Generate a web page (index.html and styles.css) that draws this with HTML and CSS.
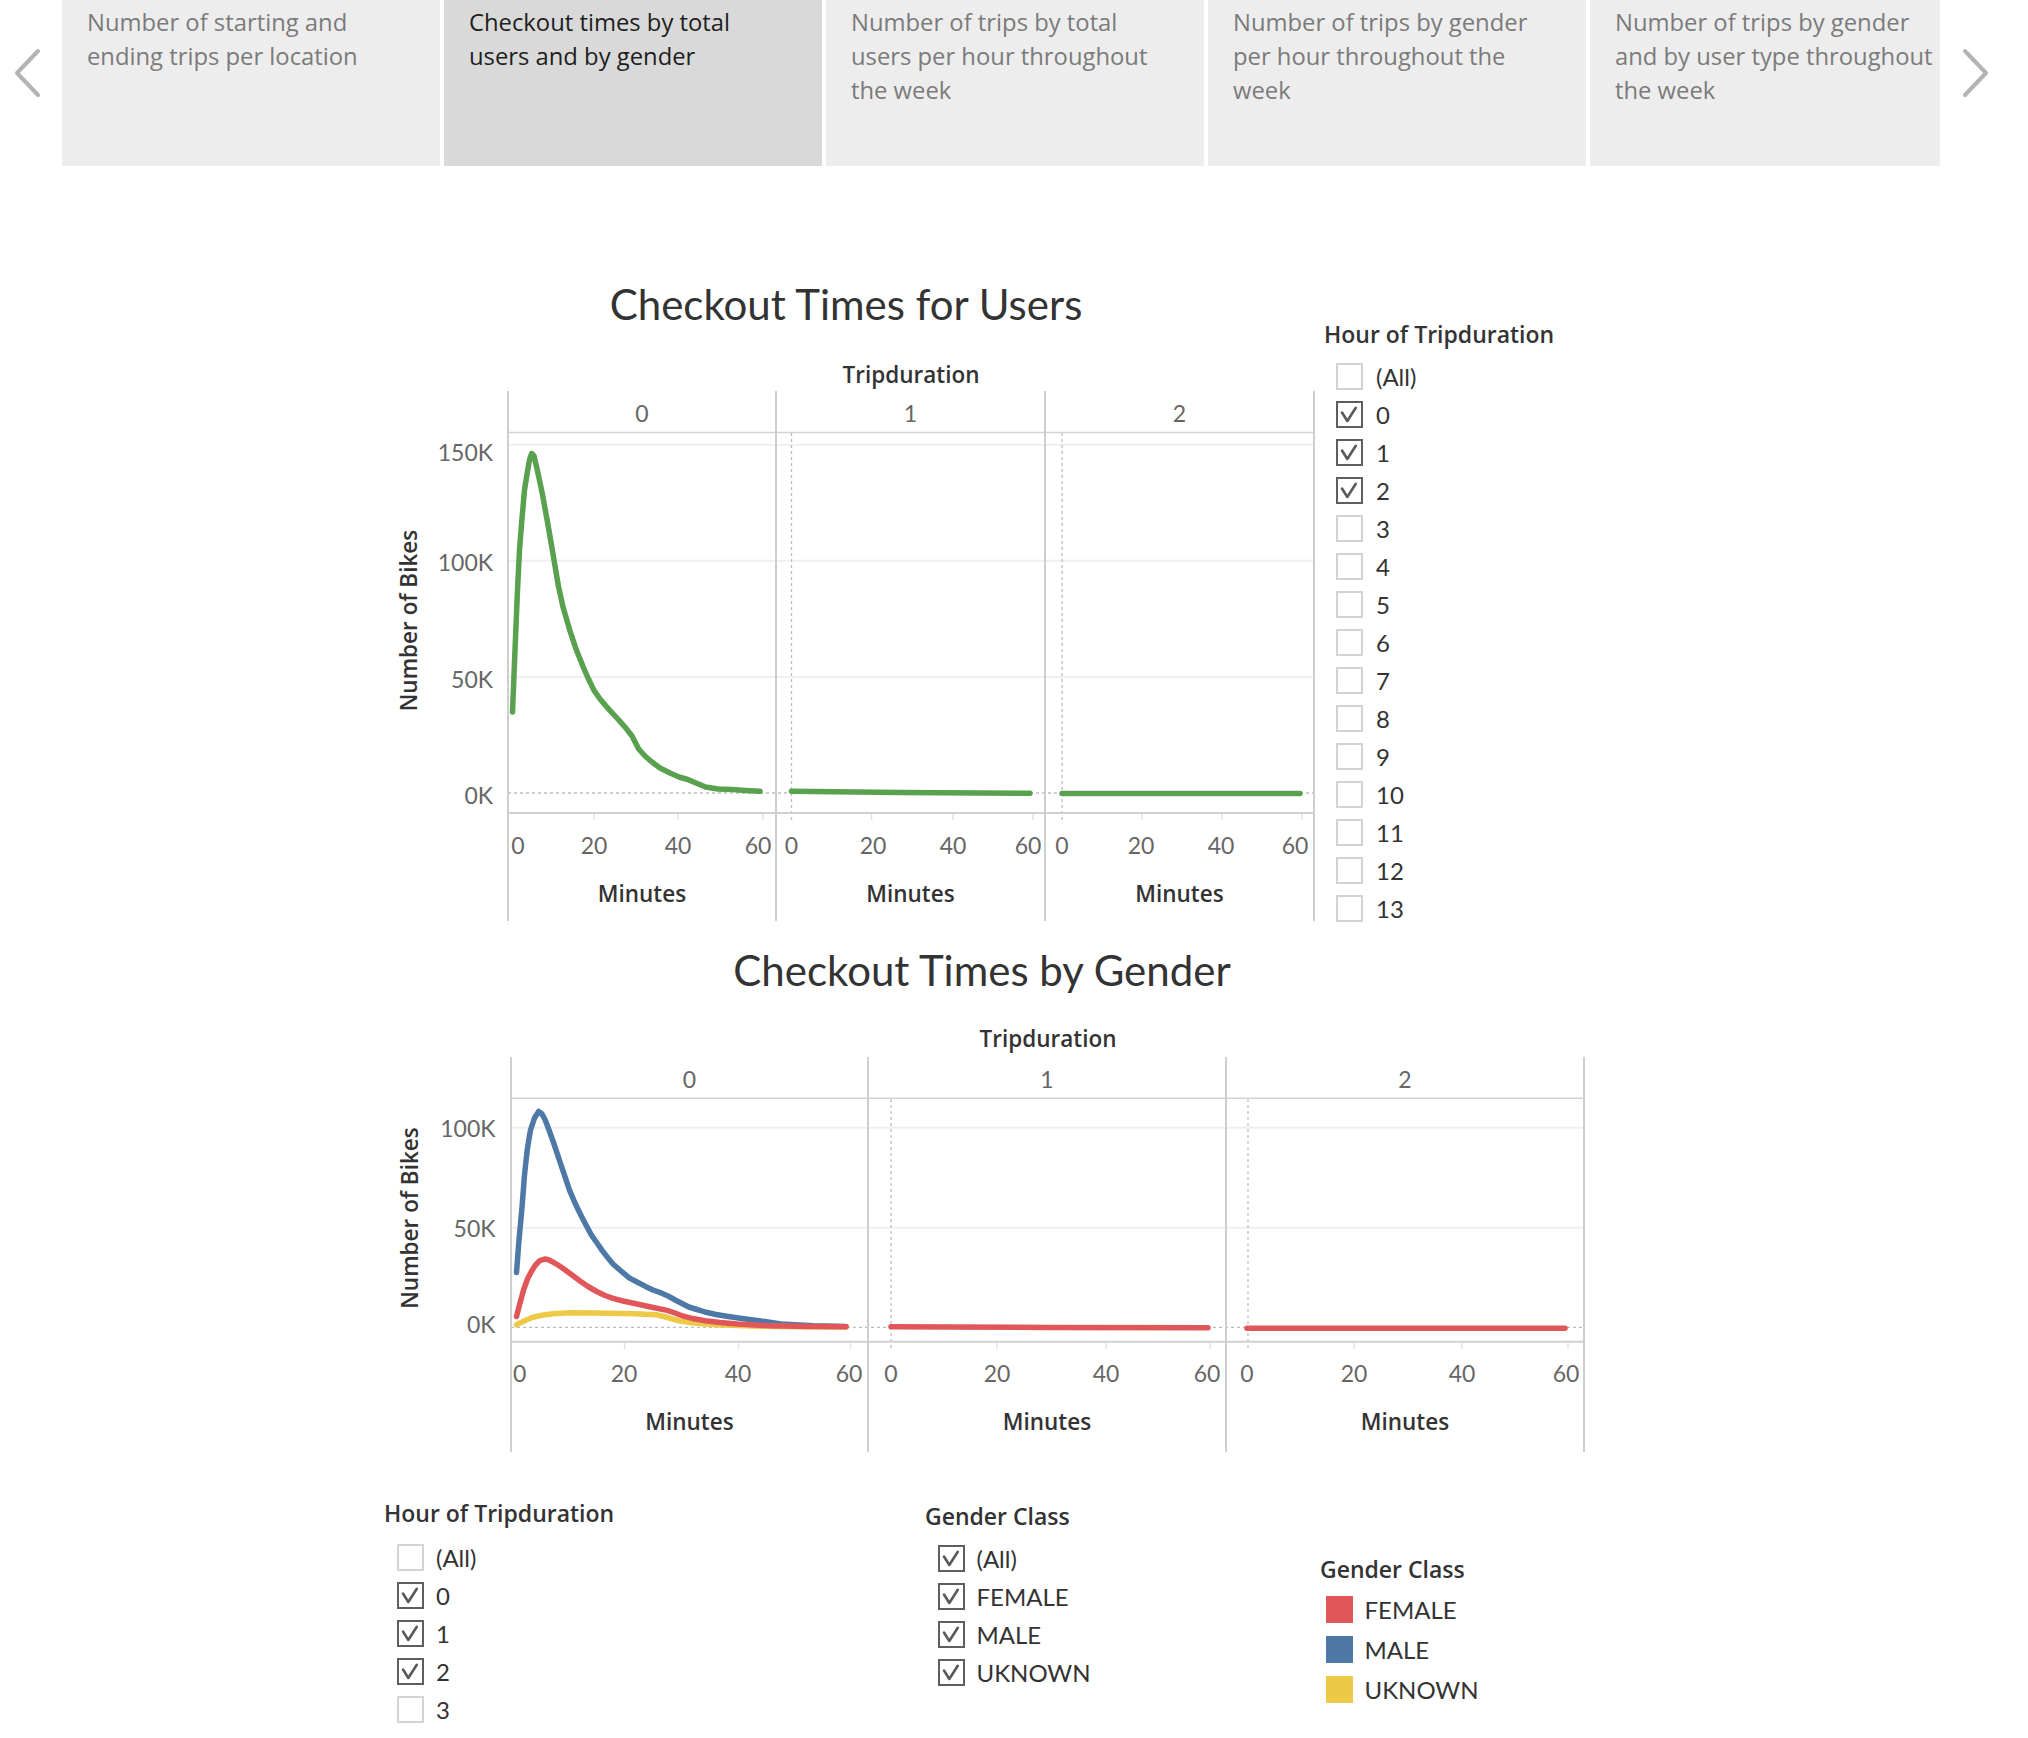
FILE: index.html
```html
<!DOCTYPE html>
<html lang="en">
<head>
<meta charset="utf-8">
<title>Checkout times by total users and by gender</title>
<link rel="stylesheet" href="styles.css">
</head>
<body>
<header class="tabbar">
  <div class="nav nav-left">
    <svg width="28" height="48" viewBox="0 0 28 48"><path d="M25 2 L4 24 L25 46" class="chev"/></svg>
  </div>
  <div class="tabs">
    <div class="tab">Number of starting and<br>ending trips per location</div>
    <div class="tab active">Checkout times by total<br>users and by gender</div>
    <div class="tab">Number of trips by total<br>users per hour throughout<br>the week</div>
    <div class="tab">Number of trips by gender<br>per hour throughout the<br>week</div>
    <div class="tab">Number of trips by gender<br>and by user type throughout<br>the week</div>
  </div>
  <div class="nav nav-right">
    <svg width="28" height="48" viewBox="0 0 28 48"><path d="M3 2 L24 24 L3 46" class="chev"/></svg>
  </div>
</header>

<main>
  <section class="row1">
    <div class="sheet1">
      <h2 class="title">Checkout Times for Users</h2>
      <svg class="chart1" width="940" height="575" viewBox="376 352 940 575">
        <g class="grid">
          <line x1="508" y1="444.8" x2="1314" y2="444.8"/>
          <line x1="508" y1="560.8" x2="1314" y2="560.8"/>
          <line x1="508" y1="676.9" x2="1314" y2="676.9"/>
        </g>
        <line class="hline" x1="508" y1="432.6" x2="1314" y2="432.6"/>
        <line class="dash" x1="508" y1="793" x2="1314" y2="793"/>
        <line class="dash" x1="791.5" y1="433" x2="791.5" y2="821"/>
        <line class="dash" x1="1062" y1="433" x2="1062" y2="821"/>
        <line class="axis" x1="508" y1="813" x2="1314" y2="813"/>
        <g class="ticks">
          <line x1="594" y1="814" x2="594" y2="820"/><line x1="678" y1="814" x2="678" y2="820"/><line x1="763" y1="814" x2="763" y2="820"/>
          <line x1="871.5" y1="814" x2="871.5" y2="820"/><line x1="953" y1="814" x2="953" y2="820"/><line x1="1033" y1="814" x2="1033" y2="820"/>
          <line x1="1142" y1="814" x2="1142" y2="820"/><line x1="1222" y1="814" x2="1222" y2="820"/><line x1="1302" y1="814" x2="1302" y2="820"/>
        </g>
        <g class="panel">
          <line x1="508" y1="391" x2="508" y2="921"/>
          <line x1="776" y1="391" x2="776" y2="921"/>
          <line x1="1045" y1="391" x2="1045" y2="921"/>
          <line x1="1314" y1="391" x2="1314" y2="921"/>
        </g>
        <polyline class="ln green" points="512.5,712 515,650 517.5,590 519.5,550 521.8,521 524.5,490 527.2,473 529.5,460 531.6,453.5 534,456 537,468.7 542,492 547.3,521 552,548 558.4,586 563,607 569.6,629.6 576,649 583,666.5 588,678 594,690.4 600,699 607.5,707.8 616,717 625.3,727.4 632,736 638.7,749 645,756 652,762 660,768 670,773 679,777 687.8,779.5 696,783 705.6,787 718,789 732.4,789.6 745,790.5 760,791.3"/>
        <polyline class="ln green" points="791.5,791.3 900,792.4 1030,793.3"/>
        <polyline class="ln green" points="1062,793.5 1300,793.6"/>

        <text class="axt" x="911" y="383" text-anchor="middle">Tripduration</text>
        <g class="hdr" text-anchor="middle">
          <text x="642" y="422">0</text><text x="910.5" y="422">1</text><text x="1179.5" y="422">2</text>
        </g>
        <g class="tick" text-anchor="end">
          <text x="493" y="461">150K</text><text x="493" y="571">100K</text><text x="493" y="688">50K</text><text x="493" y="803.5">0K</text>
        </g>
        <g class="tick" text-anchor="middle">
          <text x="518" y="853.5">0</text><text x="594" y="853.5">20</text><text x="678" y="853.5">40</text><text x="758" y="853.5">60</text>
          <text x="791.5" y="853.5">0</text><text x="873" y="853.5">20</text><text x="953" y="853.5">40</text><text x="1028" y="853.5">60</text>
          <text x="1062" y="853.5">0</text><text x="1141" y="853.5">20</text><text x="1221" y="853.5">40</text><text x="1295" y="853.5">60</text>
        </g>
        <g class="axt" text-anchor="middle">
          <text x="642" y="902">Minutes</text><text x="910.5" y="902">Minutes</text><text x="1179.5" y="902">Minutes</text>
        </g>
        <text class="axt" x="408" y="620.5" text-anchor="middle" dominant-baseline="central" transform="rotate(-90 408 620.5)">Number of Bikes</text>
      </svg>
    </div>

    <aside class="filter filter1">
      <h3 class="ftitle">Hour of Tripduration</h3>
      <ul class="flist clip">
        <li class="fitem"><span class="cb"></span>(All)</li>
        <li class="fitem"><span class="cb on"><svg viewBox="0 0 23 23"><path d="M4 9.5 L9.3 18 L17.8 4.8"/></svg></span>0</li>
        <li class="fitem"><span class="cb on"><svg viewBox="0 0 23 23"><path d="M4 9.5 L9.3 18 L17.8 4.8"/></svg></span>1</li>
        <li class="fitem"><span class="cb on"><svg viewBox="0 0 23 23"><path d="M4 9.5 L9.3 18 L17.8 4.8"/></svg></span>2</li>
        <li class="fitem"><span class="cb"></span>3</li>
        <li class="fitem"><span class="cb"></span>4</li>
        <li class="fitem"><span class="cb"></span>5</li>
        <li class="fitem"><span class="cb"></span>6</li>
        <li class="fitem"><span class="cb"></span>7</li>
        <li class="fitem"><span class="cb"></span>8</li>
        <li class="fitem"><span class="cb"></span>9</li>
        <li class="fitem"><span class="cb"></span>10</li>
        <li class="fitem"><span class="cb"></span>11</li>
        <li class="fitem"><span class="cb"></span>12</li>
        <li class="fitem"><span class="cb"></span>13</li>
      </ul>
    </aside>
  </section>

  <section class="sheet2">
    <h2 class="title title2">Checkout Times by Gender</h2>
    <svg class="chart2" width="1210" height="440" viewBox="380 1020 1210 440">
      <g class="grid">
        <line x1="511" y1="1127.7" x2="1584" y2="1127.7"/>
        <line x1="511" y1="1227.7" x2="1584" y2="1227.7"/>
      </g>
      <line class="hline" x1="511" y1="1098.3" x2="1584" y2="1098.3"/>
      <line class="dash" x1="511" y1="1327.3" x2="1584" y2="1327.3"/>
      <line class="dash" x1="891" y1="1099" x2="891" y2="1350"/>
      <line class="dash" x1="1248" y1="1099" x2="1248" y2="1350"/>
      <line class="axis" x1="511" y1="1341.7" x2="1584" y2="1341.7"/>
      <g class="ticks">
        <line x1="624.6" y1="1343" x2="624.6" y2="1349"/><line x1="738.7" y1="1343" x2="738.7" y2="1349"/><line x1="850.6" y1="1343" x2="850.6" y2="1349"/>
        <line x1="997" y1="1343" x2="997" y2="1349"/><line x1="1106" y1="1343" x2="1106" y2="1349"/><line x1="1210" y1="1343" x2="1210" y2="1349"/>
        <line x1="1354" y1="1343" x2="1354" y2="1349"/><line x1="1462" y1="1343" x2="1462" y2="1349"/><line x1="1568" y1="1343" x2="1568" y2="1349"/>
      </g>
      <g class="panel">
        <line x1="511" y1="1057" x2="511" y2="1452"/>
        <line x1="868" y1="1057" x2="868" y2="1452"/>
        <line x1="1226" y1="1057" x2="1226" y2="1452"/>
        <line x1="1584" y1="1057" x2="1584" y2="1452"/>
      </g>
      <polyline class="ln blue" points="516.5,1272.6 519,1240 522,1207.5 524.5,1175 527.3,1149.2 530.5,1130 534.4,1118.3 538.7,1111.5 542,1114 545.2,1120 549,1130 553.4,1142.3 561.5,1166.3 569.6,1190.3 575,1203 580.4,1214.3 586,1225 591.3,1234.9 597,1243 602.1,1250.4 608,1258 613,1264 621,1271 629.2,1277.8 637,1282 645.5,1286.4 653,1290 661.7,1293.2 668,1296 675.2,1300 682,1303.5 688.8,1307 697,1309.5 705,1312 716,1314.5 726.7,1316.2 742,1318.5 759.2,1320.7 780.9,1324 813.4,1325.8 846,1326.5"/>
      <polyline class="ln yellow" points="516.5,1324.8 521,1322.5 526.3,1320 531,1318 537.1,1316.2 545,1314.8 553.4,1313.8 569.6,1312.8 596.7,1313.1 634.6,1313.8 656.3,1314.8 664,1316.5 672.5,1319 680,1321 688.8,1322.4 700,1323.6 715.9,1324.8 759.2,1326.2 802.5,1326.8 846,1327"/>
      <polyline class="ln red" points="516.5,1316.5 520,1303 523.6,1289.8 527.5,1279 531.7,1270.9 535.5,1265 539.8,1260.6 545.2,1258.9 549,1260 553.4,1262.3 558,1265 564.2,1269.2 572,1275 580.4,1281.2 588,1286.5 596.7,1291.5 605,1295.5 613,1298.4 623,1301 634.6,1303.5 650.9,1307 667.1,1310.4 675,1313 683.4,1316.2 694,1318.8 705,1320.7 720,1322.5 737.5,1324 770,1325.8 810,1326.5 846,1326.8"/>
      <polyline class="ln red" points="891,1326.8 1050,1327.4 1208,1327.8"/>
      <polyline class="ln red" points="1247,1328.2 1565,1328.2"/>

      <text class="axt" x="1048" y="1047" text-anchor="middle">Tripduration</text>
      <g class="hdr" text-anchor="middle">
        <text x="689.5" y="1088">0</text><text x="1047" y="1088">1</text><text x="1405" y="1088">2</text>
      </g>
      <g class="tick" text-anchor="end">
        <text x="495.5" y="1137">100K</text><text x="495.5" y="1236.6">50K</text><text x="495.5" y="1332.6">0K</text>
      </g>
      <g class="tick" text-anchor="middle">
        <text x="519.7" y="1382">0</text><text x="624" y="1382">20</text><text x="738" y="1382">40</text><text x="849" y="1382">60</text>
        <text x="891" y="1382">0</text><text x="997" y="1382">20</text><text x="1106" y="1382">40</text><text x="1207" y="1382">60</text>
        <text x="1247" y="1382">0</text><text x="1354" y="1382">20</text><text x="1462" y="1382">40</text><text x="1566" y="1382">60</text>
      </g>
      <g class="axt" text-anchor="middle">
        <text x="689.5" y="1430">Minutes</text><text x="1047" y="1430">Minutes</text><text x="1405" y="1430">Minutes</text>
      </g>
      <text class="axt" x="409" y="1218" text-anchor="middle" dominant-baseline="central" transform="rotate(-90 409 1218)">Number of Bikes</text>
    </svg>
  </section>

  <section class="row3">
    <div class="filter bf1">
      <h3 class="ftitle">Hour of Tripduration</h3>
      <ul class="flist">
        <li class="fitem"><span class="cb"></span>(All)</li>
        <li class="fitem"><span class="cb on"><svg viewBox="0 0 23 23"><path d="M4 9.5 L9.3 18 L17.8 4.8"/></svg></span>0</li>
        <li class="fitem"><span class="cb on"><svg viewBox="0 0 23 23"><path d="M4 9.5 L9.3 18 L17.8 4.8"/></svg></span>1</li>
        <li class="fitem"><span class="cb on"><svg viewBox="0 0 23 23"><path d="M4 9.5 L9.3 18 L17.8 4.8"/></svg></span>2</li>
        <li class="fitem"><span class="cb"></span>3</li>
      </ul>
    </div>
    <div class="filter bf2">
      <h3 class="ftitle">Gender Class</h3>
      <ul class="flist">
        <li class="fitem"><span class="cb on"><svg viewBox="0 0 23 23"><path d="M4 9.5 L9.3 18 L17.8 4.8"/></svg></span>(All)</li>
        <li class="fitem"><span class="cb on"><svg viewBox="0 0 23 23"><path d="M4 9.5 L9.3 18 L17.8 4.8"/></svg></span>FEMALE</li>
        <li class="fitem"><span class="cb on"><svg viewBox="0 0 23 23"><path d="M4 9.5 L9.3 18 L17.8 4.8"/></svg></span>MALE</li>
        <li class="fitem"><span class="cb on"><svg viewBox="0 0 23 23"><path d="M4 9.5 L9.3 18 L17.8 4.8"/></svg></span>UKNOWN</li>
      </ul>
    </div>
    <div class="legend">
      <h3 class="ftitle">Gender Class</h3>
      <ul class="llist">
        <li class="litem"><span class="sw sw-female"></span>FEMALE</li>
        <li class="litem"><span class="sw sw-male"></span>MALE</li>
        <li class="litem"><span class="sw sw-unknown"></span>UKNOWN</li>
      </ul>
    </div>
  </section>
</main>
</body>
</html>
```

FILE: styles.css
```css
* { box-sizing: border-box; }

body {
  margin: 0;
  background: #ffffff;
  color: #333333;
  font-family: Lato, "Open Sans", "DejaVu Sans", sans-serif;
}

h2, h3, ul { margin: 0; padding: 0; }
ul { list-style: none; }

/* ---------- top tab bar ---------- */
.tabbar {
  display: flex;
  height: 166px;
}
.nav {
  padding-top: 49px;
}
.nav-left { width: 62px; padding-left: 13px; }
.nav-right { width: 88px; padding-left: 22px; }
.chev {
  fill: none;
  stroke: #b3b3b3;
  stroke-width: 4;
  stroke-linecap: round;
  stroke-linejoin: round;
}
.tabs {
  width: 1878px;
  display: flex;
  gap: 4px;
  overflow: hidden;
}
.tab {
  flex: 0 0 378px;
  background: #ededed;
  padding: 5px 8px 0 25px;
  font-family: "Open Sans", Lato, sans-serif;
  font-size: 23.8px;
  line-height: 34px;
  color: #7b7b7b;
  white-space: nowrap;
  overflow: hidden;
}
.tab.active {
  background: #d9d9d9;
  color: #1e1e1e;
}

/* ---------- sheets ---------- */
.row1 { display: flex; }
.sheet1 {
  margin-left: 376px;
  width: 940px;
}
.title {
  margin: 113px 0 23px;
  font-size: 42px;
  line-height: 50px;
  font-weight: 400;
  text-align: center;
  color: #333333;
  white-space: nowrap;
}
svg { display: block; overflow: visible; }

.sheet2 {
  margin-left: 380px;
  width: 1210px;
}
.title2 {
  margin: 18px 0 25px;
  padding-right: 6px;
}

.grid line { stroke: #efefef; stroke-width: 2; }
.hline { stroke: #d3d3d3; stroke-width: 1.5; }
.dash { stroke: #bdbdbd; stroke-width: 1.3; stroke-dasharray: 3 3; }
.axis { stroke: #d0d0d0; stroke-width: 2; }
.ticks line { stroke: #e2e2e2; stroke-width: 1.5; }
.panel line { stroke: #cecece; stroke-width: 2; }

.ln {
  fill: none;
  stroke-width: 5.5;
  stroke-linecap: round;
  stroke-linejoin: round;
}
.green { stroke: #59a14f; }
.blue { stroke: #4e79a7; }
.red { stroke: #e15759; }
.yellow { stroke: #edc948; }

.tick, .hdr { font-size: 23px; fill: #666666; }
.axt {
  font-family: "Open Sans", Lato, sans-serif;
  font-size: 22.5px;
  font-weight: 600;
  fill: #333333;
}

/* ---------- filters ---------- */
.ftitle {
  font-family: "Open Sans", Lato, sans-serif;
  font-size: 23px;
  line-height: 30px;
  font-weight: 600;
  color: #333333;
  white-space: nowrap;
}
.filter1 {
  margin-left: 8px;
  padding-top: 153px;
}
.flist { margin-top: 8.5px; }
.flist.clip {
  max-height: 566px;
  overflow: hidden;
}
.fitem {
  display: flex;
  align-items: center;
  height: 38px;
  padding-left: 12px;
  font-size: 24px;
  line-height: 21px;
  color: #333333;
  white-space: nowrap;
}
.cb {
  flex: 0 0 27px;
  width: 27px;
  height: 27px;
  margin-right: 13px;
  border: 2px solid #d3d3d3;
  background: #ffffff;
}
.cb.on { border-color: #5e5e5e; }
.cb svg { width: 23px; height: 23px; }
.cb path {
  fill: none;
  stroke: #5a5a5a;
  stroke-width: 2.6;
  stroke-linecap: round;
  stroke-linejoin: round;
}

.row3 {
  display: flex;
  margin-left: 384px;
}
.bf1 { width: 541px; padding-top: 38px; }
.bf1 .flist { margin-top: 10px; }
.bf1 .fitem { padding-left: 13px; }
.bf1 .cb { margin-right: 12px; }
.bf2 { width: 395px; padding-top: 41px; }
.bf2 .flist { margin-top: 8px; }
.bf2 .fitem { padding-left: 13px; }
.bf2 .cb { margin-right: 11.5px; }

.legend { padding-top: 94px; }
.llist { margin-top: 5px; }
.litem {
  display: flex;
  align-items: center;
  height: 40px;
  padding-left: 6px;
  font-size: 24px;
  color: #333333;
}
.sw {
  width: 27px;
  height: 27px;
  margin-right: 11.5px;
}
.sw-female { background: #e15759; }
.sw-male { background: #4e79a7; }
.sw-unknown { background: #edc948; }
```
